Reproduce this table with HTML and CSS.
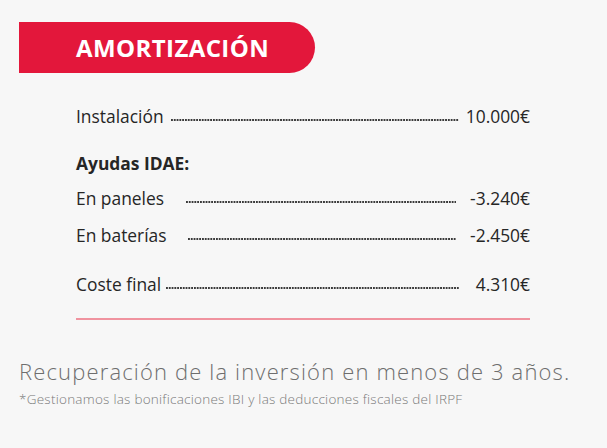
FILE: index.html
```html
<!DOCTYPE html>
<html lang="es">
<head>
<meta charset="utf-8">
<link rel="stylesheet" href="styles.css">
</head>
<body>
<div class="page">
  <div class="banner"><span class="banner-title">AMORTIZACIÓN</span></div>
  <div class="table">
    <div class="row row-inst"><span class="label">Instalación</span><span class="dots"></span><span class="value">10.000€</span></div>
    <div class="heading">Ayudas IDAE:</div>
    <div class="row row-pan"><span class="label">En paneles</span><span class="dots"></span><span class="value">-3.240€</span></div>
    <div class="row row-bat"><span class="label">En baterías</span><span class="dots"></span><span class="value">-2.450€</span></div>
    <div class="row row-final"><span class="label">Coste final</span><span class="dots"></span><span class="value">4.310€</span></div>
    <div class="rule"></div>
  </div>
  <p class="recovery">Recuperación de la inversión en menos de 3 años.</p>
  <p class="note">*Gestionamos las bonificaciones IBI y las deducciones fiscales del IRPF</p>
</div>
</body>
</html>
```
FILE: styles.css
```css
html, body {
  margin: 0;
  padding: 0;
  background: #f7f7f7;
}
.page {
  width: 607px;
  height: 448px;
  padding-top: 22px;
  box-sizing: border-box;
  font-family: "Open Sans", sans-serif;
  color: #262626;
}
.banner {
  margin-left: 19px;
  width: 296px;
  height: 51px;
  background: #e3173b;
  border-radius: 0 26px 26px 0;
  display: flex;
  align-items: center;
  padding-left: 57px;
  box-sizing: border-box;
}
.banner-title {
  color: #fff;
  font-weight: 700;
  font-size: 24px;
  letter-spacing: 0.4px;
}
.table {
  margin: 32px 0 0 76px;
  width: 454px;
}
.row {
  display: flex;
  align-items: baseline;
  font-size: 17.4px;
  line-height: 22px;
}
.label { flex: none; }
.value { flex: none; }
.dots {
  flex: 1;
  height: 4px;
  background-image: linear-gradient(to right, #3a3a3a 1.4px, transparent 1.4px);
  background-size: 2.8px 1.6px;
  background-repeat: repeat-x;
  background-position: 0 0;
}
.row-inst .dots { margin: 0 7px 0 7px; }
.row-pan .dots { margin: 0 14px 0 22px; }
.row-bat .dots { margin: 0 14px 0 21px; }
.row-final .dots { margin: 0 17px 0 5px; }
.heading {
  font-weight: 700;
  font-size: 17.4px;
  line-height: 22px;
  margin-top: 25px;
}
.row-pan { margin-top: 13px; }
.row-bat { margin-top: 15px; }
.row-final { margin-top: 27px; }
.rule {
  margin-top: 23px;
  height: 2px;
  background: #f0939f;
}
.recovery {
  margin: 38px 0 0 19px;
  font-family: "Open Sans", sans-serif;
  font-weight: 300;
  font-size: 22px;
  letter-spacing: 1.15px;
  line-height: 26px;
  color: #6e6e6e;
  white-space: nowrap;
}
.note {
  margin: 6px 0 0 19px;
  font-family: "Open Sans", sans-serif;
  font-weight: 300;
  font-size: 13.5px;
  letter-spacing: 0.25px;
  line-height: 18px;
  color: #7a7a7a;
  white-space: nowrap;
}
```
